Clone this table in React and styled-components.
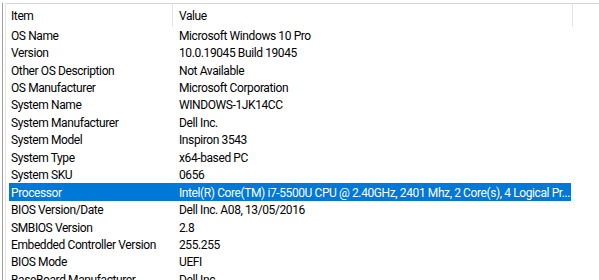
import styled, { createGlobalStyle } from "styled-components";

const Global = createGlobalStyle`
  html, body {
    margin: 0;
    background: #ffffff;
  }
  body {
    font-family: Roboto, "Noto Sans", "Liberation Sans", sans-serif;
    font-size: 12px;
    letter-spacing: -0.4px;
    color: #000;
  }
`;

const Frame = styled.div`
  width: 599px;
  height: 280px;
  overflow: hidden;
  display: flex;
  background: #fff;
`;

const Edge = styled.div`
  width: 2px;
  margin-left: 2px;
  margin-top: 3px;
  border-left: 1px solid #a0a0a0;
  border-right: 1px solid #e3e3e3;
  flex-shrink: 0;
`;

const List = styled.div`
  flex: 1;
  display: flex;
  flex-direction: column;
  padding-left: 3px;
  border-top: 1px solid #d5d5d5;
  margin-top: 3px;
`;

const Header = styled.div`
  display: grid;
  grid-template-columns: 167px 400px 1fr;
  height: 22.5px;
  flex-shrink: 0;
  margin-left: -3px;
`;

const HeadCell = styled.div`
  display: flex;
  align-items: center;
  padding-left: ${(p) => p.$pad}px;
  padding-top: 1px;
  border-right: ${(p) => (p.$divider ? "1px solid #e5e5e5" : "none")};
  white-space: nowrap;
`;

const Row = styled.div`
  display: grid;
  grid-template-columns: 166px 1fr;
  height: 17.45px;
  flex-shrink: 0;
  align-items: center;
  background: ${(p) => (p.$selected ? "#0078d7" : "transparent")};
  color: ${(p) => (p.$selected ? "#fff" : "#000")};
  width: 562px;
`;

const Cell = styled.div`
  padding-left: ${(p) => p.$pad}px;
  padding-top: 2px;
  white-space: nowrap;
  line-height: 15px;
`;

const rows = [
  ["OS Name", "Microsoft Windows 10 Pro"],
  ["Version", "10.0.19045 Build 19045"],
  ["Other OS Description", "Not Available"],
  ["OS Manufacturer", "Microsoft Corporation"],
  ["System Name", "WINDOWS-1JK14CC"],
  ["System Manufacturer", "Dell Inc."],
  ["System Model", "Inspiron 3543"],
  ["System Type", "x64-based PC"],
  ["System SKU", "0656"],
  ["Processor", "Intel(R) Core(TM) i7-5500U CPU @ 2.40GHz, 2401 Mhz, 2 Core(s), 4 Logical Pr..."],
  ["BIOS Version/Date", "Dell Inc. A08, 13/05/2016"],
  ["SMBIOS Version", "2.8"],
  ["Embedded Controller Version", "255.255"],
  ["BIOS Mode", "UEFI"],
  ["BaseBoard Manufacturer", "Dell Inc."],
];

function App() {
  return (
    <>
      <Global />
      <Frame>
        <Edge />
        <List>
          <Header>
            <HeadCell $pad={5} $divider>Item</HeadCell>
            <HeadCell $pad={6} $divider>Value</HeadCell>
            <HeadCell $pad={0} />
          </Header>
          {rows.map(([item, value]) => (
            <Row key={item} $selected={item === "Processor"}>
              <Cell $pad={2}>{item}</Cell>
              <Cell $pad={4}>{value}</Cell>
            </Row>
          ))}
        </List>
      </Frame>
    </>
  );
}

export default App;
